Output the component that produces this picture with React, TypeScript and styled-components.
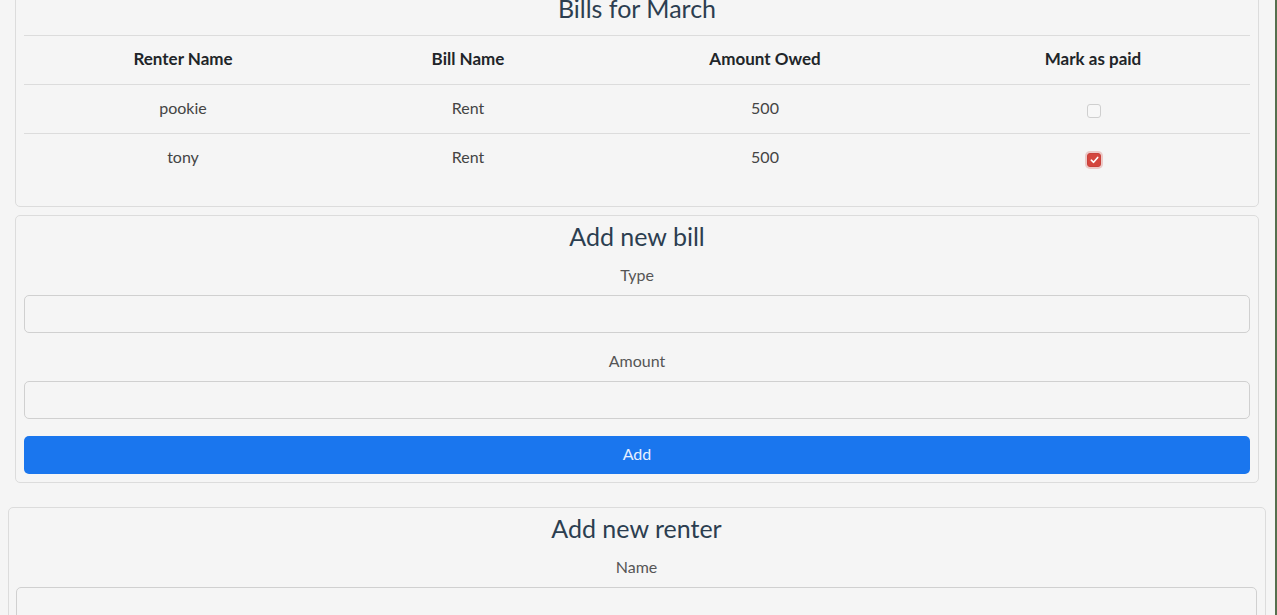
import styled, { createGlobalStyle } from "styled-components";

const GlobalStyle = createGlobalStyle`
  html, body {
    margin: 0;
    padding: 0;
    background: #f5f5f5;
    font-family: "Lato", "Noto Sans", sans-serif;
    color: #444;
    overflow: hidden;
  }
`;

const Page = styled.div`
  width: 1277px;
  height: 615px;
  overflow: hidden;
  box-sizing: border-box;
  border-right: 2px solid #55704e;
`;

// the page is shown scrolled a little, so the first card's top is out of view
const Scrolled = styled.div`
  margin-top: -13px;
`;

const Section = styled.div`
  padding: 0 16px 0 15px;
  display: flex;
  flex-direction: column;
  gap: 8px;
`;

const Card = styled.div<{ $wide?: boolean }>`
  border: 1px solid #dcdcdc;
  border-radius: 5px;
  background: #f5f5f5;
  padding: ${(p) => (p.$wide ? "6px 8px 8px 7px" : "6px 8px 8px 8px")};
  text-align: center;
`;

const Title = styled.h2`
  margin: 0;
  padding-bottom: 2px;
  font-size: 25px;
  font-weight: 400;
  line-height: 29px;
  color: #2c3e50;
`;

const Table = styled.table`
  width: 100%;
  border-collapse: collapse;
  margin: 10px 0 16px;
  font-size: 16px;
`;

const Th = styled.th`
  font-size: 17px;
  font-weight: 700;
  color: #212529;
  height: 45px;
  padding: 0 0 3px;
  border-top: 1px solid #dcdcdc;
  border-bottom: 1px solid #dcdcdc;
`;

const Td = styled.td<{ $last?: boolean }>`
  height: 45px;
  padding: 0 0 3px;
  color: #444;
  border-bottom: ${(p) => (p.$last ? "none" : "1px solid #dcdcdc")};
`;

const Check = styled.span<{ $on?: boolean }>`
  display: inline-flex;
  align-items: center;
  justify-content: center;
  width: 14px;
  height: 14px;
  box-sizing: border-box;
  border-radius: 3px;
  vertical-align: middle;
  margin: 3px 0 0 2px;
  border: 1px solid ${(p) => (p.$on ? "#c9403a" : "#cfcfcf")};
  background: ${(p) => (p.$on ? "#d4463e" : "#f7f7f7")};
  box-shadow: ${(p) => (p.$on ? "0 0 0 2px rgba(212, 70, 62, 0.25)" : "none")};
`;

const Form = styled.div`
  display: flex;
  flex-direction: column;
`;

const Label = styled.label`
  display: block;
  margin-top: 10px;
  font-size: 16px;
  line-height: 24px;
  color: #555;
`;

const Input = styled.input`
  display: block;
  width: 100%;
  box-sizing: border-box;
  height: 38px;
  margin-top: 8px;
  border: 1px solid #d0d0d0;
  border-radius: 5px;
  background: #f5f5f5;
  font: inherit;
  outline: none;
`;

const FieldGap = styled.div`
  height: 6px;
`;

const Button = styled.button`
  margin-top: 17px;
  height: 38px;
  padding: 0 0 3px;
  border: none;
  border-radius: 5px;
  background: #1a76ee;
  color: #e6efff;
  font-family: inherit;
  font-size: 16px;
`;

const LowerSection = styled.div`
  margin-top: 24px;
  padding: 0 9px 0 8px;
`;

const bills = [
  { renter: "pookie", bill: "Rent", amount: 500, paid: false },
  { renter: "tony", bill: "Rent", amount: 500, paid: true },
];

const Tick = () => (
  <svg width="9" height="8" viewBox="0 0 9 8">
    <path d="M1.3 4.2 L3.6 6.3 L7.7 1.4" fill="none" stroke="#fff" strokeWidth="1.6" strokeLinecap="round" strokeLinejoin="round" />
  </svg>
);

export default function App() {
  return (
    <Page>
      <GlobalStyle />
      <Scrolled>
        <Section>
          <Card>
            <Title>Bills for March</Title>
            <Table>
              <colgroup>
                <col style={{ width: 318 }} />
                <col style={{ width: 252 }} />
                <col style={{ width: 342 }} />
                <col style={{ width: 314 }} />
              </colgroup>
              <thead>
                <tr>
                  <Th>Renter Name</Th>
                  <Th>Bill Name</Th>
                  <Th>Amount Owed</Th>
                  <Th>Mark as paid</Th>
                </tr>
              </thead>
              <tbody>
                {bills.map((b, i) => {
                  const last = i === bills.length - 1;
                  return (
                    <tr key={b.renter}>
                      <Td $last={last}>{b.renter}</Td>
                      <Td $last={last}>{b.bill}</Td>
                      <Td $last={last}>{b.amount}</Td>
                      <Td $last={last}>
                        <Check $on={b.paid}>{b.paid && <Tick />}</Check>
                      </Td>
                    </tr>
                  );
                })}
              </tbody>
            </Table>
          </Card>
          <Card>
            <Title>Add new bill</Title>
            <Form>
              <Label>Type</Label>
              <Input />
              <FieldGap />
              <Label>Amount</Label>
              <Input />
              <Button>Add</Button>
            </Form>
          </Card>
        </Section>
        <LowerSection>
          <Card $wide>
            <Title>Add new renter</Title>
            <Form>
              <Label>Name</Label>
              <Input />
            </Form>
          </Card>
        </LowerSection>
      </Scrolled>
    </Page>
  );
}
